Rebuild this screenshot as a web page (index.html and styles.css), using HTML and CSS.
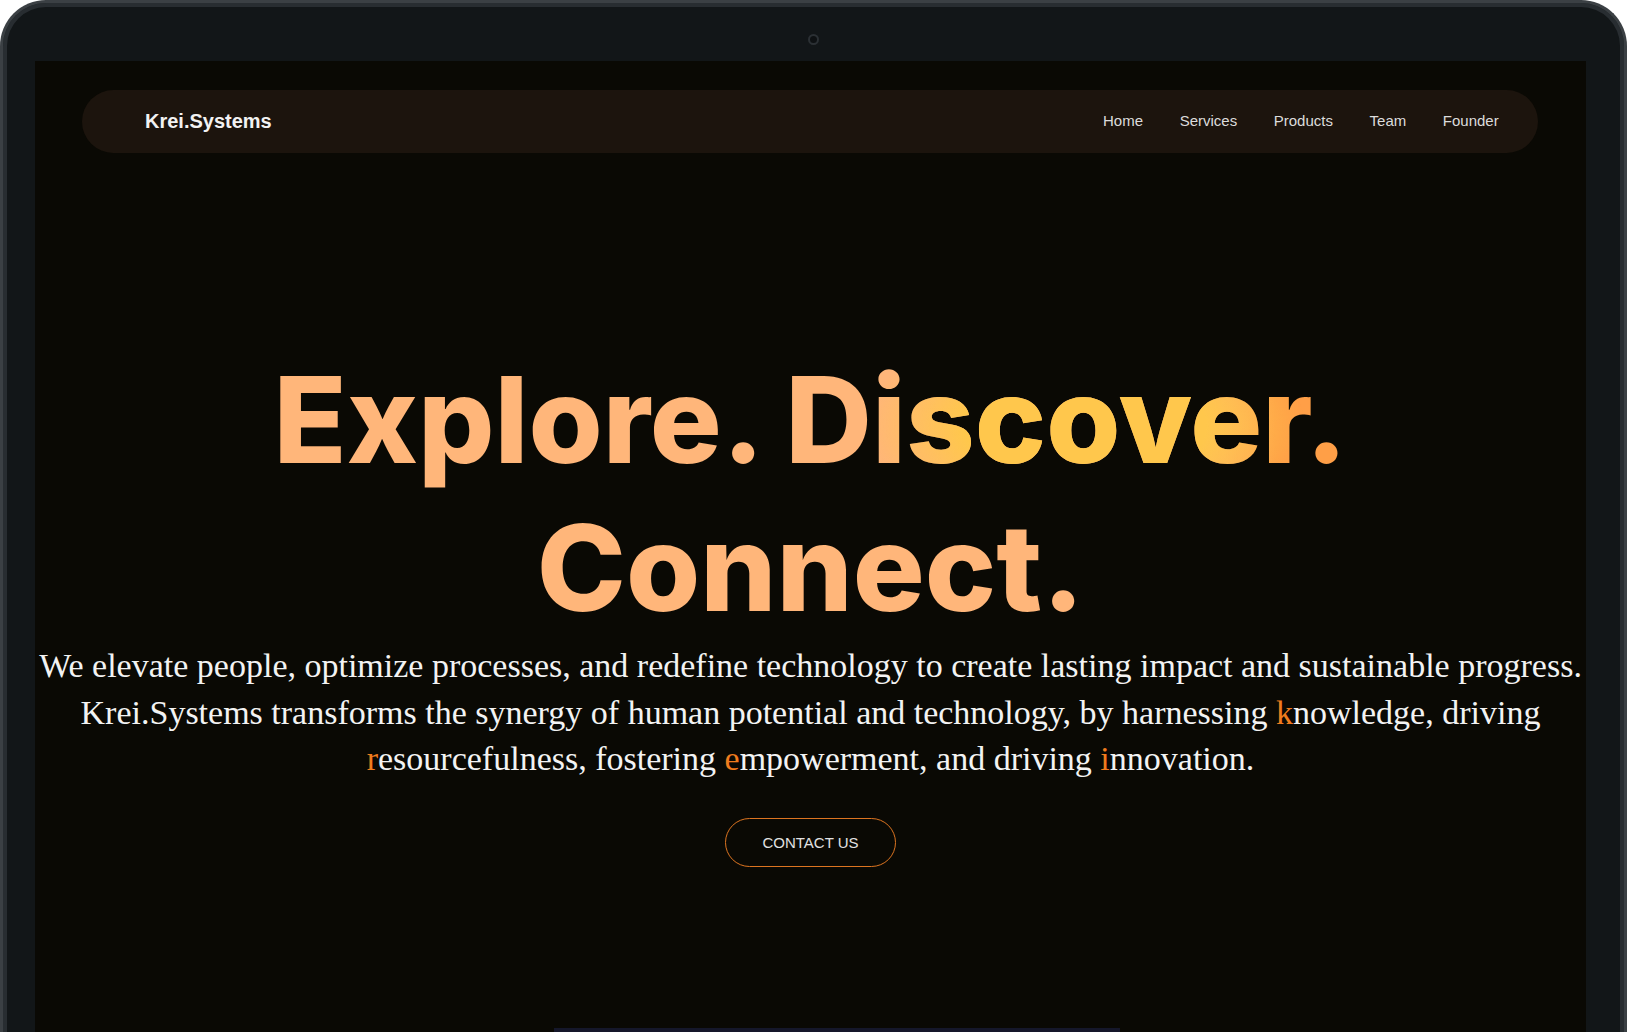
FILE: index.html
```html
<!DOCTYPE html>
<html lang="en">
<head>
<meta charset="utf-8">
<title>Krei.Systems</title>
<link rel="stylesheet" href="styles.css">
</head>
<body>
<div class="device">
  <div class="bezel-top"><span class="camera"></span></div>
  <div class="screen">
    <nav class="nav">
      <a class="logo" href="#">Krei.Systems</a>
      <ul class="links">
        <li><a href="#">Home</a></li>
        <li><a href="#">Services</a></li>
        <li><a href="#">Products</a></li>
        <li><a href="#">Team</a></li>
        <li><a href="#">Founder</a></li>
      </ul>
    </nav>
    <section class="hero">
      <h1 class="headline">Explore. Discover.<br>Connect.</h1>
      <p class="lead">We elevate people, optimize processes, and redefine technology to create lasting impact and sustainable progress.<br>Krei.Systems transforms the synergy of human potential and technology, by harnessing <span class="hl">k</span>nowledge, driving<br><span class="hl">r</span>esourcefulness, fostering <span class="hl">e</span>mpowerment, and driving <span class="hl">i</span>nnovation.</p>
      <a class="cta" href="#">CONTACT US</a>
    </section>
    <section class="next"><div class="next-card"></div></section>
  </div>
</div>
</body>
</html>
```
FILE: styles.css
```css
html, body {
  margin: 0;
  padding: 0;
  background: #ffffff;
  overflow: hidden;
  height: 100%;
}

.device {
  width: 1621px;
  height: 1100px;
  border: 3px solid #3b4044;
  border-bottom: none;
  border-radius: 46px 46px 0 0;
  background: #121618;
  box-shadow: inset 0 0 0 4px #282d31;
}

.bezel-top {
  height: 58px;
  box-sizing: border-box;
  padding-top: 31px;
  display: flex;
  justify-content: center;
}

.camera {
  width: 11px;
  height: 11px;
  box-sizing: border-box;
  border-radius: 50%;
  border: 2px solid #2b3034;
  background: #0e1113;
}

.screen {
  margin: 0 38px 0 32px;
  height: 1100px;
  background: #0a0904;
  overflow: hidden;
}

.nav {
  margin: 29px 48px 0 47px;
  height: 63px;
  border-radius: 32px;
  background: #1c140d;
  display: flex;
  align-items: center;
  justify-content: space-between;
  padding: 0 21px 0 63px;
  font-family: "Liberation Sans", Arial, sans-serif;
}

.logo {
  color: #f2f2f2;
  font-weight: 700;
  font-size: 20px;
  text-decoration: none;
}

.links {
  list-style: none;
  margin: 0 0 2px;
  padding: 0;
  display: flex;
}

.links a {
  display: block;
  padding: 0 18.3px;
  color: #dcdcdc;
  font-size: 15px;
  text-decoration: none;
}

.hero {
  display: flex;
  flex-direction: column;
  align-items: center;
  padding-bottom: 161px;
}

.headline {
  align-self: stretch;
  margin: 193px 0 0;
  text-align: center;
  font-family: Inter, "Liberation Sans", sans-serif;
  font-weight: 800;
  font-size: 120px;
  line-height: 148px;
  color: transparent;
  background:
    radial-gradient(ellipse 220px 110px at 1050px 80px, #ffc74c 0%, #ffc74c 55%, rgba(255, 199, 76, 0) 100%),
    linear-gradient(90deg, #ffb67a 0, #ffb67a 1150px, #ff9f47 1240px);
  -webkit-background-clip: text;
  background-clip: text;
}

.lead {
  margin: 1px 0 0;
  text-align: center;
  white-space: nowrap;
  font-family: "Liberation Serif", "Times New Roman", serif;
  font-size: 34px;
  line-height: 46.7px;
  color: #f3f3f3;
}

.hl {
  color: #f07c1e;
}

.cta {
  margin-top: 35px;
  padding: 15px 36px;
  border: 1px solid #dc7420;
  border-radius: 26px;
  color: #e2e2e2;
  font-family: "Liberation Sans", Arial, sans-serif;
  font-size: 15px;
  line-height: 17px;
  text-decoration: none;
}

.next {
  padding-left: 519px;
}

.next-card {
  width: 566px;
  height: 60px;
  background: #15172a;
}
```
